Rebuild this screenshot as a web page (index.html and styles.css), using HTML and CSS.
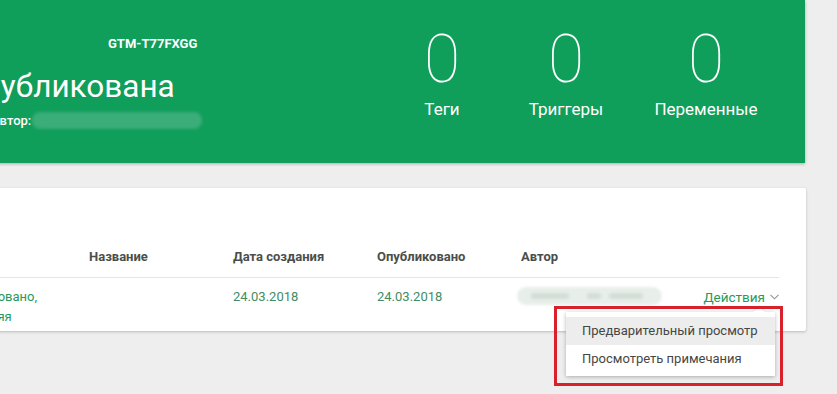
FILE: index.html
```html
<!DOCTYPE html>
<html lang="ru">

<head>
  <meta charset="UTF-8" />
  <meta name="viewport" content="width=device-width, initial-scale=1.0" />
  <title>Версии</title>
  <link rel="stylesheet" href="styles.css">
</head>

<body>
  <div class="page">
    <section class="version-card">
      <div class="version-info">
        <div class="container-id">GTM-T77FXGG</div>
        <h1 class="version-title">Опубликована</h1>
        <div class="version-author">Автор:<span class="blurred"></span></div>
      </div>

      <div class="stats">
        <div class="stat">
          <div class="stat-value">0</div>
          <div class="stat-label">Теги</div>
        </div>
        <div class="stat">
          <div class="stat-value">0</div>
          <div class="stat-label">Триггеры</div>
        </div>
        <div class="stat">
          <div class="stat-value">0</div>
          <div class="stat-label">Переменные</div>
        </div>
      </div>
    </section>

    <section class="history-card">
      <div class="history-row history-head">
        <div>Статус</div>
        <div>Название</div>
        <div>Дата создания</div>
        <div>Опубликовано</div>
        <div>Автор</div>
        <div></div>
      </div>
      <div class="history-row history-item">
        <div class="status">Опубликовано, последняя</div>
        <div></div>
        <div class="date">24.03.2018</div>
        <div class="date">24.03.2018</div>
        <div><span class="author-blur"><span></span><span></span><span></span></span></div>
        <div class="actions">
          <span class="actions-toggle">Действия
            <svg width="9" height="6" viewBox="0 0 9 6"><path d="M0.5 0.8 L4.5 4.8 L8.5 0.8" fill="none" stroke="#8f9792" stroke-width="1.1" /></svg>
          </span>
          <div class="actions-menu">
            <div class="menu-item active">Предварительный просмотр</div>
            <div class="menu-item">Просмотреть примечания</div>
          </div>
          <div class="highlight-box"></div>
        </div>
      </div>
    </section>
  </div>
</body>

</html>
```

FILE: styles.css
```css
:root {
  --green: #109e5b;
  --green-text: #259a5b;
  --date-text: #438c63;
  --head-text: #4a4e4b;
  --page-bg: #edeeed;
  --white: #ffffff;
}

* {
  margin: 0;
  padding: 0;
  box-sizing: border-box;
  font-family: Roboto, 'Noto Sans', sans-serif;
}

body {
  background-color: var(--page-bg);
  overflow: hidden;
  width: 837px;
  height: 394px;
}

.page {
  width: 1025px;
  margin-left: -220px;
}

/* Version summary */
.version-card {
  background: var(--green);
  color: var(--white);
  height: 163px;
  display: flex;
  justify-content: space-between;
  padding: 36px 21px 0 181px;
  box-shadow: 0 1px 3px rgba(0, 0, 0, 0.28);
}

.container-id {
  font-size: 13px;
  font-weight: 700;
  line-height: 16px;
  margin-left: 147px;
}

.version-title {
  font-size: 31.5px;
  font-weight: 400;
  line-height: 36px;
  margin-top: 17px;
}

.version-author {
  display: flex;
  align-items: center;
  height: 18px;
  margin-top: 6px;
  margin-left: 30px;
  font-size: 13px;
  font-weight: 500;
}

.blurred {
  display: inline-block;
  width: 170px;
  height: 17px;
  margin-left: 1px;
  border-radius: 8px;
  background: #3aad78;
  filter: blur(1.5px);
}

.stats {
  display: grid;
  grid-template-columns: 124px 124px 156px;
  margin-top: -9px;
}

.stat {
  text-align: center;
}

.stat-value {
  font-size: 66px;
  font-weight: 100;
  line-height: 66px;
}

.stat-label {
  font-size: 17px;
  line-height: 20px;
  margin-top: 6px;
}

/* Version history table */
.history-card {
  background: var(--white);
  margin-top: 25px;
  width: 1026px;
  border-radius: 2px;
  box-shadow: 0 1px 3px rgba(0, 0, 0, 0.22);
  padding-left: 166px;
  padding-right: 27px;
}

.history-row {
  display: grid;
  grid-template-columns: 143px 144px 144px 144px 144px 1fr;
}

.history-head {
  padding: 61px 0 12px;
  border-bottom: 1px solid #e2e6e3;
  color: var(--head-text);
  font-size: 13px;
  font-weight: 700;
  line-height: 16px;
}

.history-item {
  padding: 9px 0 4px;
  font-size: 13px;
  line-height: 20px;
}

.status {
  color: var(--green-text);
  padding-right: 20px;
}

.date {
  color: var(--date-text);
}

.author-blur {
  display: flex;
  align-items: center;
  gap: 8px;
  width: 145px;
  height: 18px;
  margin-left: -4px;
  padding-left: 14px;
  border-radius: 9px;
  background: #e8eee9;
  filter: blur(1.5px);
}

.author-blur span {
  height: 6px;
  width: 38px;
  border-radius: 3px;
  background: #d3ded6;
}

.author-blur span:nth-child(2) {
  width: 14px;
  margin-left: 10px;
}

.author-blur span:nth-child(3) {
  width: 34px;
}

.actions {
  position: relative;
  justify-self: end;
}

.actions-toggle {
  display: inline-flex;
  align-items: center;
  gap: 5px;
  color: var(--green-text);
  font-size: 13.5px;
  line-height: 20px;
}

.actions-menu {
  position: absolute;
  top: 25px;
  right: 4px;
  width: 209px;
  padding: 5px 0 3px;
  background: var(--white);
  box-shadow: 0 1px 4px rgba(0, 0, 0, 0.28);
  z-index: 2;
}

.actions-menu::before {
  content: "";
  position: absolute;
  top: -4px;
  right: 12px;
  width: 8px;
  height: 8px;
  background: var(--white);
  transform: rotate(45deg);
  box-shadow: -1px -1px 1px rgba(0, 0, 0, 0.08);
}

.menu-item {
  position: relative;
  padding: 0 16px;
  height: 28px;
  line-height: 27px;
  font-size: 13px;
  color: #454745;
  white-space: nowrap;
}

.menu-item.active {
  background: #ecedec;
}

.highlight-box {
  position: absolute;
  top: 19px;
  right: -4px;
  width: 229px;
  height: 80px;
  border: 3px solid #d9212b;
  z-index: 3;
}
```
